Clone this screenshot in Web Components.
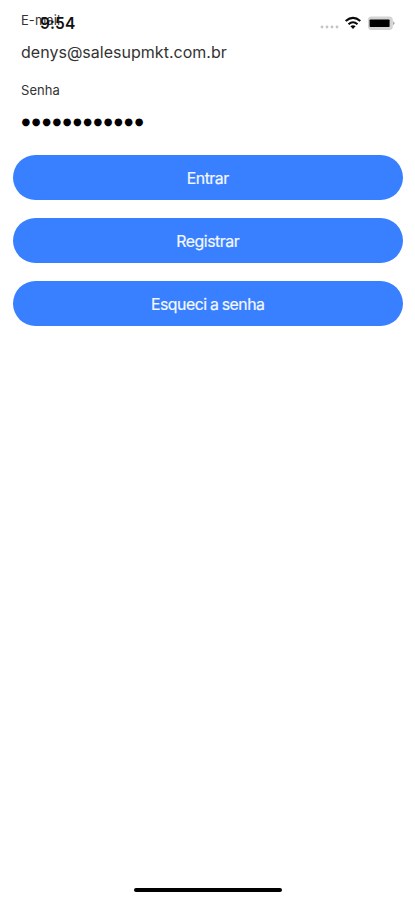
<!DOCTYPE html>
<html lang="pt-BR">
<head>
<meta charset="utf-8">
<title>Login</title>
<style>
html,body{margin:0;height:100%;background:#fff;overflow:hidden}
body{font-family:Inter,"Liberation Sans",sans-serif;color:#333}
</style>
</head>
<body>
<login-screen></login-screen>
<script>
const define=(name,html)=>{
  const t=document.createElement('template');
  t.innerHTML=html;
  customElements.define(name,class extends HTMLElement{
    constructor(){super();this.attachShadow({mode:'open'}).append(t.content.cloneNode(true));}
  });
};

define('status-bar',`<style>
:host{position:absolute;inset:0 0 auto 0;height:46px;display:flex;align-items:center;justify-content:space-between;box-sizing:border-box;padding:0 20px 0 40px}
.time{font-size:15.5px;font-weight:600;line-height:20px;padding-top:2px;color:#111;letter-spacing:.1px;white-space:nowrap}
svg{display:block}
</style>
<span class="time">9:54</span>
<svg width="76" height="20" viewBox="319 13 76 20">
<g fill="#c4c4c4"><circle cx="322" cy="27" r="1.4"/><circle cx="327" cy="27" r="1.4"/><circle cx="332" cy="27" r="1.4"/><circle cx="337" cy="27" r="1.4"/></g>
<g fill="none" stroke="#080808" stroke-width="2.1"><path d="M345.7 21Q353 14.7 360.3 21"/><path d="M348.5 24.2Q353 20.3 357.5 24.2"/></g>
<path d="M350.4 26.2Q353 24.2 355.6 26.2L353 29Z" fill="#080808"/>
<rect x="368.6" y="17" width="23.6" height="12.4" rx="2.8" fill="#d4d4d4" stroke="#d4d4d4" stroke-width="1.2"/>
<rect x="369.6" y="19.4" width="20" height="7.6" rx=".8" fill="#000"/>
<path d="M393 21.3Q396 23.2 393 25.2Z" fill="#aaa"/>
</svg>`);

define('form-field',`<style>
:host{display:flex;flex-direction:column;height:70px;padding-left:21px;box-sizing:border-box}
.label{font-size:13px;line-height:20px;height:20px;letter-spacing:.05px;color:#333}
.value{font-size:16px;line-height:24px;height:24px;margin-top:10px;letter-spacing:.02px;white-space:nowrap;color:#333}
</style>
<div class="label"><slot name="label"></slot></div>
<div class="value"><slot></slot></div>`);

define('pill-button',`<style>
:host{display:block}
button{display:flex;align-items:center;justify-content:center;width:100%;height:44.6px;border:0;border-radius:23px;padding:3.2px 0 0;margin:0;background:#3880ff;color:#f5f8ff;font-family:inherit;font-size:15.8px;line-height:20px;letter-spacing:-.45px;word-spacing:-.7px;-webkit-text-stroke:.2px #f5f8ff}
</style>
<button type="button"><slot></slot></button>`);

define('home-indicator',`<style>
:host{position:absolute;left:134px;bottom:8px;width:148px;height:4.5px;border-radius:3px;background:#000}
</style>`);

define('login-screen',`<style>
:host{display:block;position:relative;height:900px;width:415px;background:#fff;overflow:hidden}
main{padding-top:10px}
.dots{display:block;height:24px;padding-left:.6px;line-height:23px;font-family:"DejaVu Sans",sans-serif;font-size:10px;letter-spacing:1.55px;color:#000}
.actions{display:flex;flex-direction:column;gap:18.4px;padding:5px 12px 0 12.5px}
</style>
<main>
<form-field><span slot="label">E-mail</span>denys@salesupmkt.com.br</form-field>
<form-field><span slot="label">Senha</span><span class="dots">●●●●●●●●●●●●</span></form-field>
<div class="actions">
<pill-button>Entrar</pill-button>
<pill-button>Registrar</pill-button>
<pill-button>Esqueci a senha</pill-button>
</div>
</main>
<status-bar></status-bar>
<home-indicator></home-indicator>`);
</script>
</body>
</html>
